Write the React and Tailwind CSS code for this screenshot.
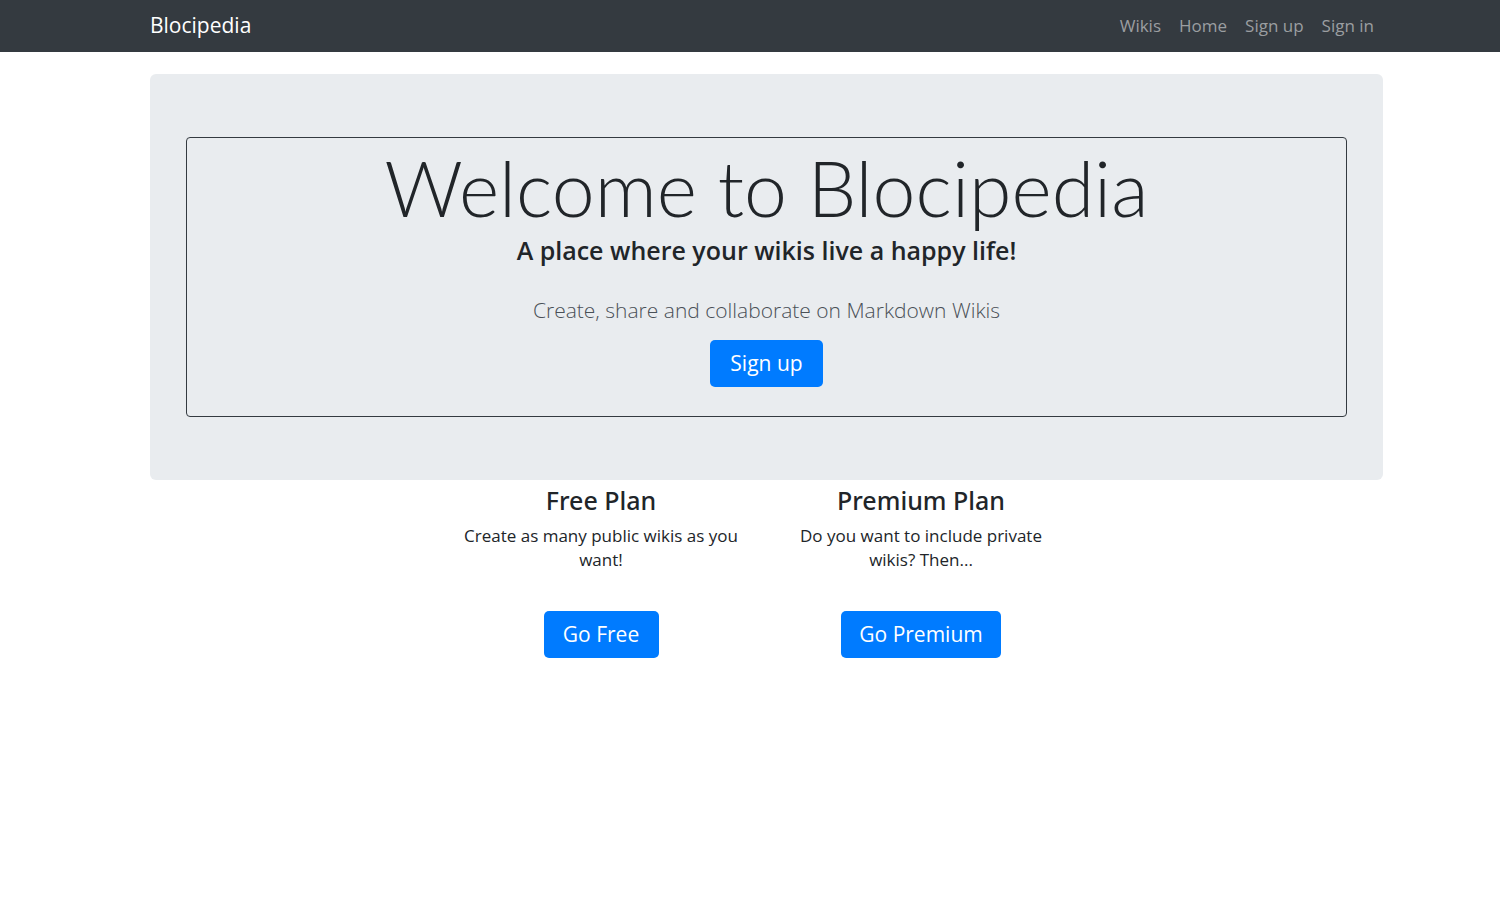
export default function App() {
  const font = { fontFamily: '"Open Sans", "Noto Sans", sans-serif' }
  return (
    <div className="min-h-screen bg-white text-[#212529]" style={font}>
      <nav className="h-[52px] bg-[#343a40]">
        <div className="ml-[150px] flex h-full w-[1233px] items-center justify-between">
          <span className="text-[21px] text-white">Blocipedia</span>
          <div className="flex items-center gap-[18px] pr-[9px] text-[17px] text-[#9b9ea1]">
            <a>Wikis</a>
            <a>Home</a>
            <a>Sign up</a>
            <a>Sign in</a>
          </div>
        </div>
      </nav>

      <div className="ml-[150px] mt-[22px] w-[1233px] rounded-[6px] bg-[#e9ecef] px-[36px] py-[63px]">
        <div className="flex h-[280px] flex-col items-center rounded-[4px] border border-[#343a40] pt-[6px]">
          <h1 className="font-['Lato',sans-serif] text-[77px] font-light leading-[86px]">Welcome to Blocipedia</h1>
          <p className="mt-[8px] text-[25px] font-semibold leading-[24px]">A place where your wikis live a happy life!</p>
          <p className="mt-[34px] text-[21px] font-light leading-[28px] text-[#495057]">Create, share and collaborate on Markdown Wikis</p>
          <button className="mt-[16px] h-[47px] w-[113px] rounded-[5px] bg-[#007bff] text-[21px] text-white">Sign up</button>
        </div>
      </div>

      <div className="flex justify-center gap-[40px] pl-[22px]">
        <div className="flex w-[280px] flex-col items-center text-center">
          <h3 className="mt-[5px] font-['Noto_Sans',sans-serif] text-[25px] font-medium leading-[30px]">Free Plan</h3>
          <p className="mt-[9px] text-[17px] leading-[24px]">Create as many public wikis as you want!</p>
          <button className="mt-[39px] h-[47px] w-[115px] rounded-[5px] bg-[#007bff] text-[21px] text-white">Go Free</button>
        </div>
        <div className="flex w-[280px] flex-col items-center text-center">
          <h3 className="mt-[5px] font-['Noto_Sans',sans-serif] text-[25px] font-medium leading-[30px]">Premium Plan</h3>
          <p className="mt-[9px] text-[17px] leading-[24px]">Do you want to include private wikis? Then...</p>
          <button className="mt-[39px] h-[47px] w-[160px] rounded-[5px] bg-[#007bff] text-[21px] text-white">Go Premium</button>
        </div>
      </div>
    </div>
  )
}
